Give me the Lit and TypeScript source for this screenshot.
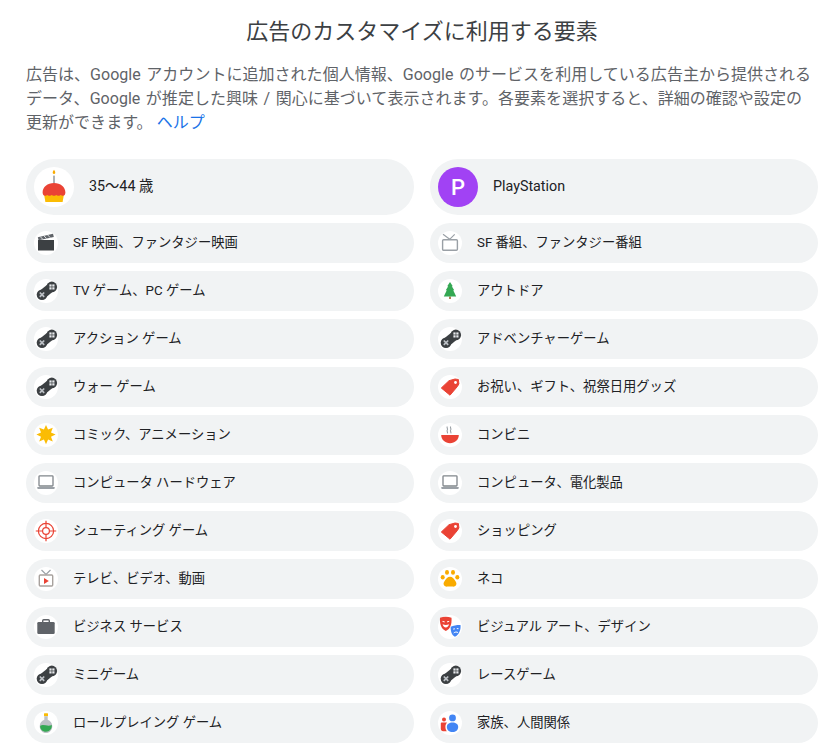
import { LitElement, html, css, svg } from "lit";
import { customElement } from "lit/decorators.js";

const game = svg`<path d="M8 15.700 17.800 7.800" stroke="#3c4043" stroke-width="9" fill="none"/>
<circle cx="17.800" cy="7.900" r="5.300" fill="#3c4043"/><circle cx="8" cy="15.700" r="5.300" fill="#3c4043"/>
<g fill="#e8eaed"><rect x="15.400" y="5.400" width="2.200" height="2.200"/><rect x="18.300" y="5.400" width="2.200" height="2.200"/><rect x="15.400" y="8.300" width="2.200" height="2.200"/><rect x="18.300" y="8.300" width="2.200" height="2.200"/></g>
<path d="M5.800 13.500l4.400 4.400M10.200 13.500l-4.400 4.400" stroke="#bdc1c6" stroke-width="1.700" fill="none"/>`;

const laptop = svg`<rect x="5" y="4.800" width="14" height="10.200" rx=".8" fill="#fff" stroke="#80868b" stroke-width="1.300"/>
<path d="M3.300 16h17.400v.9c0 .7-.5 1.100-1.100 1.100H4.400c-.6 0-1.100-.4-1.100-1.100z" fill="#9aa0a6"/>`;

const tag = svg`<path d="M3.300 13 11 5.700l6-1.700 3.400.5.500 4.400-1.500 2.600-7.400 8.700z" fill="#ea4335" stroke="#ea4335" stroke-width="1" stroke-linejoin="round"/><circle cx="17.500" cy="7.500" r="1.400" fill="#fff"/>`;

const star = (() => {
  const pts: string[] = [];
  for (let i = 0; i < 16; i++) {
    const a = (i * Math.PI) / 8 - Math.PI / 2;
    const r = i % 2 === 0 ? 9.6 : 5.4;
    pts.push(`${(12 + r * Math.cos(a)).toFixed(2)},${(11.6 + r * Math.sin(a)).toFixed(2)}`);
  }
  return pts.join(" ");
})();

const icons: Record<string, unknown> = {
  cake: svg`<path d="M20 2.800c1 1.300 1.500 2.300 1.200 3.500-.2.900-2.200.9-2.400 0-.3-1.200.2-2.200 1.200-3.500z" fill="#f9ab00"/>
  <rect x="19.200" y="8.600" width="1.600" height="8" fill="#9aa0a6"/>
  <path d="M10 27h20l-1.400 8H11.400z" fill="#fbbc04"/>
  <path d="M20 16c6.500 0 11.400 4 11.400 9.500 0 2-1.100 3.300-2.300 3.300-1 0-1.800-.9-2.300-.9s-1.300.9-2.300.9-1.800-.9-2.200-.9-1.300.9-2.300.9-1.800-.9-2.300-.9-1.300.9-2.300.9-1.700-.9-2.200-.9-1.300.9-2.300.9c-1.200 0-2.300-1.300-2.300-3.300C8.600 20 13.500 16 20 16z" fill="#ea4335"/>`,
  clap: svg`<rect x="4" y="9" width="16" height="10.500" fill="#3c4043"/>
  <path d="M3.800 6.300 19 2.800l.8 3.200L4.600 9.300z" fill="#5f6368"/>
  <path d="M6.300 5.700l2.500 2.600M10 4.900l2.500 2.600M13.700 4l2.500 2.600" stroke="#dadce0" stroke-width="1"/>`,
  tv: svg`<path d="M5 3.300l6.700 5 5-5" fill="none" stroke="#9aa0a6" stroke-width="1.200"/>
  <rect x="4.600" y="8.800" width="14.800" height="10.400" rx="1" fill="#fff" stroke="#9aa0a6" stroke-width="1.400"/>`,
  tree: svg`<rect x="11.200" y="17.500" width="1.600" height="2.500" fill="#a0622d"/>
  <path d="M12 3l2.800 4.300h-1l2.400 4h-1l3 6.300H5.800l3-6.300h-1l2.400-4h-1z" fill="#34a853"/>`,
  game,
  tag,
  star: svg`<polygon points="${star}" fill="#fbbc04"/>`,
  bowl: svg`<path d="M9.300 3.500c-1 1.200 1 2.300 0 3.500s1 2.300 0 3.300M12.700 3.500c-1 1.200 1 2.300 0 3.500s1 2.300 0 3.300" fill="none" stroke="#9aa0a6" stroke-width="1.100"/>
  <path d="M3.200 12h17.600c0 4.700-3.900 8.200-8.800 8.200S3.200 16.700 3.200 12z" fill="#ea4335"/>`,
  laptop,
  target: svg`<g fill="none" stroke="#ea4335" stroke-width="1.200"><circle cx="12" cy="12" r="7.600"/><circle cx="12" cy="12" r="3.400"/><path d="M12 1.800v7M12 15.200v7M1.800 12h7M15.200 12h7"/></g>`,
  play: svg`<path d="M7.500 3l4.500 4.500L16.500 3" fill="none" stroke="#9aa0a6" stroke-width="1.200"/>
  <rect x="5.300" y="8" width="13.400" height="11" rx="1" fill="#fff" stroke="#a8a29e" stroke-width="1.400"/>
  <path d="M10 11.100l4.800 2.900-4.800 2.900z" fill="#ea4335"/>`,
  paw: svg`<g fill="#f9ab00"><ellipse cx="4.700" cy="10.200" rx="2" ry="2.300"/><ellipse cx="9" cy="5.400" rx="2" ry="2.400"/><ellipse cx="15" cy="5.400" rx="2" ry="2.400"/><ellipse cx="19.300" cy="10.200" rx="2" ry="2.300"/>
  <path d="M12 9.800c2.400 0 3.900 2.100 5.200 3.900 1.200 1.600 1.600 3 .9 4.400-.8 1.600-2.700 1.800-3.800 1.500-1.500-.3-3.100-.3-4.600 0-1.100.3-3 .1-3.800-1.500-.7-1.400-.3-2.800.9-4.400C8.100 11.900 9.600 9.800 12 9.800z"/></g>`,
  case: svg`<path d="M8.700 7V5.800c0-.6.500-1 1-1h4.600c.5 0 1 .4 1 1V7" fill="none" stroke="#5f6368" stroke-width="1.400"/>
  <rect x="3.300" y="7" width="17.400" height="12" rx="1.300" fill="#5f6368"/>`,
  flask: svg`<rect x="10" y="2.300" width="4" height="3" rx=".5" fill="#fbbc04"/>
  <path d="M10.300 5.300h3.400v3.400c2.700 1 4.600 3.400 4.600 6.600 0 3.900-2.800 6.800-6.300 6.800s-6.300-2.900-6.300-6.800c0-3.200 1.900-5.600 4.600-6.600z" fill="#bdc1c6"/>
  <path d="M6.200 14.700c3.500-1.800 7.500 1.200 11.600-.7.400 3.800-2.300 6.700-5.800 6.700s-6.300-2.700-5.800-6z" fill="#34a853"/>`,
  masks: svg`<path d="M12.700 11.800c3-1.400 6.300-1.900 9.800-1.800.6 4.300-1.400 10-5.600 11.700-2.900-1-4.500-5.400-4.200-9.900z" fill="#4285f4"/>
  <path d="M2 2.800c3.400-1.400 8-1.500 11.500 0 .5 5.600-1 11.300-5.700 13.200C3.100 14.100 1.500 8.400 2 2.800z" fill="#ea4335"/>
  <path d="M4.500 6.400l2.200.5M9 6.900l2.200-.5" stroke="#fff" stroke-width="1" fill="none"/>
  <path d="M4.600 9.300c2 .8 4.400.8 6.400 0-.3 1.900-1.700 3.100-3.200 3.100s-2.900-1.200-3.200-3.100z" fill="#fff"/>
  <path d="M15.200 14.100l1.700-.3M18.800 13.600l1.700.1M15.700 18c1.300-1.200 3.200-1.300 4.400-.3" stroke="#fff" stroke-width="1" fill="none"/>`,
  family: svg`<circle cx="6" cy="8.600" r="2" fill="#ea4335"/>
  <path d="M2.800 12.400c0-.6.500-1 1-1h4.400c.3 0 .6.100.8.400-1 1-1.600 2.400-1.600 4 0 1.800.5 3.300 1.400 4.500H5c-1.200 0-2.200-1-2.200-2.200z" fill="#ea4335"/>
  <circle cx="14.500" cy="6.900" r="3.400" fill="#4285f4"/>
  <path d="M8.800 16c0-3 2.500-4.500 5.700-4.500S20.200 13 20.200 16c0 3.100-2.500 5-5.700 5S8.800 19.100 8.800 16z" fill="#4285f4"/>`,
};

const rows: [string, string, string, string][] = [
  ["clap", "SF 映画、ファンタジー映画", "tv", "SF 番組、ファンタジー番組"],
  ["game", "TV ゲーム、PC ゲーム", "tree", "アウトドア"],
  ["game", "アクション ゲーム", "game", "アドベンチャーゲーム"],
  ["game", "ウォー ゲーム", "tag", "お祝い、ギフト、祝祭日用グッズ"],
  ["star", "コミック、アニメーション", "bowl", "コンビニ"],
  ["laptop", "コンピュータ ハードウェア", "laptop", "コンピュータ、電化製品"],
  ["target", "シューティング ゲーム", "tag", "ショッピング"],
  ["play", "テレビ、ビデオ、動画", "paw", "ネコ"],
  ["case", "ビジネス サービス", "masks", "ビジュアル アート、デザイン"],
  ["game", "ミニゲーム", "game", "レースゲーム"],
  ["flask", "ロールプレイング ゲーム", "family", "家族、人間関係"],
];

@customElement("app-root")
export class AppRoot extends LitElement {
  static styles = css`
    :host {
      display: block;
      font-family: Roboto, "Noto Sans CJK JP", sans-serif;
      background: #fff;
      height: 749px;
      overflow: hidden;
    }
    .page {
      padding: 18px 12px 0 26px;
    }
    h1 {
      margin: 0 0 17px;
      font-size: 22px;
      line-height: 28px;
      font-weight: 400;
      color: #3c4043;
      text-align: center;
    }
    p {
      margin: 0 6px 24px 0;
      font-size: 16px;
      line-height: 24px;
      color: #5f6368;
      word-spacing: 1.500px;
      letter-spacing: 0.030px;
    }
    a {
      color: #1a73e8;
      text-decoration: none;
      margin-left: 4px;
    }
    .grid {
      display: grid;
      grid-template-columns: 388px 388px;
      column-gap: 16px;
      row-gap: 8px;
    }
    .pill {
      display: flex;
      align-items: center;
      gap: 15px;
      height: 40px;
      padding-left: 8px;
      border-radius: 20px;
      background: #f1f3f4;
      font-size: 13.300px;
      color: #202124;
    }
    .pill.big {
      height: 56px;
      border-radius: 28px;
      font-size: 14.300px;
    }
    .label {
      line-height: 20px;
      margin-bottom: 1px;
    }
    .big .label {
      margin-bottom: 3px;
    }
    .circle {
      width: 24px;
      height: 24px;
      border-radius: 50%;
      background: #fff;
      flex: none;
      display: flex;
      align-items: center;
      justify-content: center;
    }
    .big .circle {
      width: 40px;
      height: 40px;
    }
    .circle.purple {
      background: #a142f4;
      color: #fff;
      font-size: 22px;
      font-weight: 500;
    }
    svg {
      display: block;
      overflow: visible;
    }
  `;

  private pill(icon: string, label: string) {
    return html`<div class="pill">
      <span class="circle"><svg width="24" height="24" viewBox="0 0 24 24">${icons[icon]}</svg></span>
      <span class="label">${label}</span>
    </div>`;
  }

  render() {
    return html`<div class="page">
      <h1>広告のカスタマイズに利用する要素</h1>
      <p>広告は、Google アカウントに追加された個人情報、Google のサービスを利用している広告主から提供されるデータ、Google が推定した興味 / 関心に基づいて表示されます。各要素を選択すると、詳細の確認や設定の更新ができます。<a href="#">ヘルプ</a></p>
      <div class="grid">
        <div class="pill big">
          <span class="circle"><svg width="40" height="40" viewBox="0 0 40 40">${icons.cake}</svg></span>
          <span class="label">35～44 歳</span>
        </div>
        <div class="pill big">
          <span class="circle purple">P</span>
          <span class="label">PlayStation</span>
        </div>
        ${rows.map(
          ([a, la, b, lb]) => html`${this.pill(a, la)}${this.pill(b, lb)}`
        )}
      </div>
    </div>`;
  }
}
